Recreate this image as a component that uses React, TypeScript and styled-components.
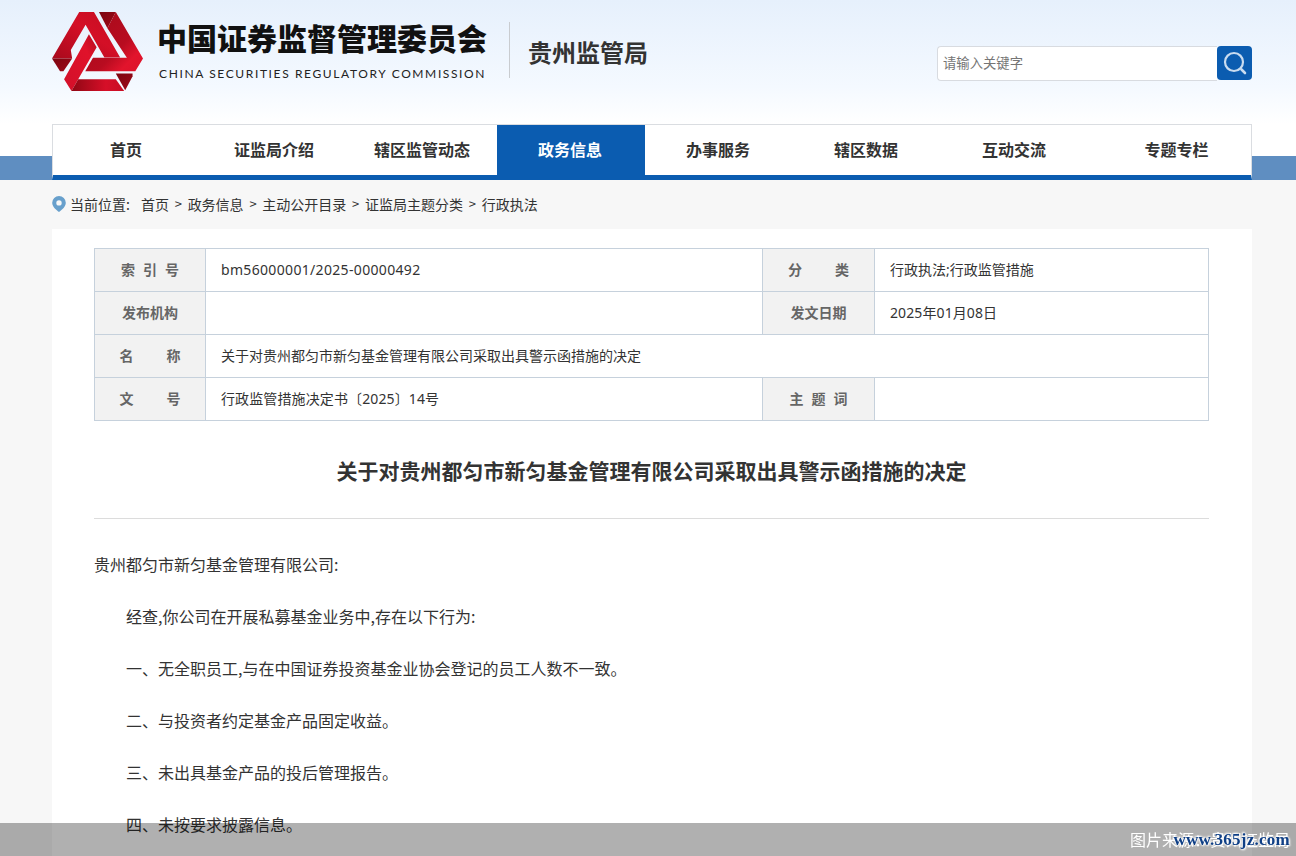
import React from "react";
import styled, { createGlobalStyle } from "styled-components";

const Global = createGlobalStyle`
  html, body { margin: 0; padding: 0; height: 856px; overflow: hidden; background: #f7f7f7; }
  body { font-family: "Noto Sans CJK SC", "Noto Sans", sans-serif; color: #333; }
  * { box-sizing: border-box; }
`;

const Page = styled.div`
  width: 1296px;
  height: 856px;
  overflow: hidden;
`;

const HeaderBand = styled.header`
  height: 124px;
  background: linear-gradient(180deg, #e6f0fc 0%, #f4f9ff 70%, #ffffff 100%);
`;

const Inner = styled.div`
  width: 1200px;
  margin: 0 0 0 52px;
`;

const HeaderRow = styled(Inner)`
  display: flex;
  align-items: flex-start;
  padding-top: 12px;
`;

const LogoMark = styled.svg`
  width: 91px;
  height: 79px;
  flex: none;
`;

const Brand = styled.div`
  margin-left: 14px;
  width: 340px;
  flex: none;
`;

const BrandCn = styled.div`
  font-size: 30px;
  line-height: 50px;
  font-weight: 900;
  color: #111;
  white-space: nowrap;
`;

const BrandEn = styled.div`
  margin-top: 3px;
  margin-left: 2px;
  font-family: "Lato", "Open Sans", sans-serif;
  font-size: 12px;
  line-height: 18px;
  letter-spacing: 1.62px;
  color: #222;
  white-space: nowrap;
`;

const Divider = styled.div`
  width: 1px;
  height: 56px;
  margin: 10px 0 0 12px;
  background: #c9ccd0;
  flex: none;
`;

const Bureau = styled.div`
  margin: 22px 0 0 18px;
  font-size: 24px;
  line-height: 36px;
  font-weight: 700;
  color: #333;
  white-space: nowrap;
`;

const Search = styled.form`
  margin: 34px 0 0 auto;
  display: flex;
  width: 315px;
  flex: none;
`;

const SearchInput = styled.input`
  width: 280px;
  height: 35px;
  padding: 0 5px 2px;
  border: 1px solid #d8dbe0;
  border-right: none;
  border-radius: 4px 0 0 4px;
  background: #fff;
  font-family: inherit;
  font-size: 13.33px;
  outline: none;
  &::placeholder { color: #757575; opacity: 1; }
`;

const SearchButton = styled.button`
  width: 35px;
  height: 34px;
  padding: 0;
  border: none;
  border-radius: 4px;
  background: #0b5cb0;
  display: flex;
  align-items: center;
  justify-content: center;
`;

const NavBand = styled.div`
  height: 56px;
  background: linear-gradient(180deg, #fff 32px, #5f8ec1 32px);
`;

const Nav = styled.nav`
  width: 1200px;
  height: 56px;
  margin-left: 52px;
  display: flex;
  background: #fff;
  border: 1px solid #dadde1;
  border-bottom: 5px solid #0b5cb0;
`;

const NavItem = styled.a<{ $active?: boolean; $last?: boolean }>`
  width: ${(p) => (p.$last ? "auto" : "148px")};
  flex: ${(p) => (p.$last ? "1" : "none")};
  padding: 0 ${(p) => (p.$last ? "0" : "2px")} 2px ${(p) => (p.$last ? "13px" : "0")};
  display: flex;
  align-items: center;
  justify-content: center;
  font-size: 16px;
  font-weight: 700;
  color: ${(p) => (p.$active ? "#fff" : "#333")};
  background: ${(p) => (p.$active ? "#0b5cb0" : "transparent")};
`;

const Crumbs = styled(Inner)`
  height: 49px;
  padding-bottom: 2px;
  display: flex;
  align-items: center;
  font-size: 14px;
  color: #333;
  white-space: nowrap;
`;

const Pin = styled.svg`
  width: 14px;
  height: 16px;
  margin: 0 4px 0 0;
  flex: none;
`;

const CrumbLabel = styled.span`
  margin-right: 11px;
`;

const CrumbSep = styled.span`
  margin: 0 5.75px;
  font-size: 13px;
`;

const Panel = styled(Inner)`
  background: #fff;
  padding: 19px 43px 0 42px;
  height: 627px;
`;

const InfoTable = styled.table`
  width: 1115px;
  border-collapse: collapse;
  table-layout: fixed;
`;

const Row = styled.tr`
  height: 43px;
`;

const LabelCell = styled.th`
  padding: 0 0 2px;
  background: #f2f2f2;
  border: 1px solid #c6d1dc;
  color: #666;
  font-size: 14px;
  font-weight: 700;
  text-align: center;
  white-space: nowrap;
`;

const Spaced = styled.span<{ $gap: number }>`
  display: inline-block;
  letter-spacing: ${(p) => p.$gap}px;
  margin-right: -${(p) => p.$gap}px;
`;

const ValueCell = styled.td<{ $track?: number }>`
  padding: 0 15px 2px;
  border: 1px solid #c6d1dc;
  color: #333;
  font-family: "Noto Sans", "Noto Sans CJK SC", sans-serif;
  font-size: 14px;
  letter-spacing: ${(p) => p.$track ?? 0}px;
  white-space: nowrap;
`;

const Title = styled.h1`
  margin: 0;
  padding: 32px 0 31px;
  border-bottom: 1px solid #dcdcdc;
  width: 1115px;
  font-size: 21px;
  line-height: 34px;
  font-weight: 700;
  color: #333;
  text-align: center;
`;

const Article = styled.div`
  padding-top: 19px;
  width: 1115px;
`;

const Para = styled.p<{ $indent?: boolean }>`
  margin: 0;
  font-size: 16px;
  line-height: 52px;
  color: #333;
  text-indent: ${(p) => (p.$indent ? "32px" : "0")};
`;

const Caption = styled.div`
  position: fixed;
  left: 0;
  right: 0;
  bottom: 0;
  height: 33px;
  background: rgba(0, 0, 0, 0.31);
  color: #fff;
  font-size: 16px;
  line-height: 33px;
  text-align: right;
  padding-right: 6px;
`;

const Watermark = styled.div`
  position: fixed;
  right: 6px;
  bottom: 6px;
  font-family: "Liberation Serif", serif;
  font-size: 17px;
  line-height: 20px;
  font-weight: 700;
  color: #0f3f86;
  letter-spacing: 0.25px;
  text-shadow: 0 0 2px #fff, 0 0 3px #fff, 1px 1px 2px #fff, -1px -1px 2px #fff;
`;

const Logo = () => (
  <LogoMark viewBox="22 22 271 235" aria-hidden="true">
    <defs>
      <linearGradient id="ga" x1="0" y1="1" x2="1" y2="0">
        <stop offset="0" stopColor="#a80a1c" />
        <stop offset="0.55" stopColor="#d40f26" />
        <stop offset="1" stopColor="#c40d22" />
      </linearGradient>
      <linearGradient id="gr" x1="0" y1="0" x2="1" y2="1">
        <stop offset="0" stopColor="#a50a1a" />
        <stop offset="0.6" stopColor="#b80c20" />
        <stop offset="0.8" stopColor="#e2142c" />
        <stop offset="1" stopColor="#dc122a" />
      </linearGradient>
      <linearGradient id="gb" x1="0" y1="1" x2="1" y2="0">
        <stop offset="0" stopColor="#d2102a" />
        <stop offset="0.7" stopColor="#e0122a" />
        <stop offset="1" stopColor="#b00c20" />
      </linearGradient>
      <linearGradient id="gc" x1="0" y1="0" x2="1" y2="0">
        <stop offset="0" stopColor="#8f0714" />
        <stop offset="0.65" stopColor="#d60f28" />
        <stop offset="1" stopColor="#c80e24" />
      </linearGradient>
      <linearGradient id="gd" x1="0" y1="0" x2="1" y2="1">
        <stop offset="0" stopColor="#7c0510" />
        <stop offset="1" stopColor="#a00919" />
      </linearGradient>
    </defs>
    <polygon fill="url(#ga)" points="22,160 103,22 147,22 225,157 178,157 122,60 78,135 82,160" />
    <polygon fill="url(#gd)" points="22,160 82,160 56,198 46,198" />
    <polygon fill="url(#gd)" points="162,22 212,22 187,70" />
    <polygon fill="url(#gr)" points="212,22 293,160 270,198 121,198 144,158 245,158 187,70" />
    <polygon fill="url(#gb)" points="58,222 132,88 155,127 106,212 100,222 80,257" />
    <polygon fill="url(#gc)" points="80,257 100,222 212,222 237,257" />
    <polygon fill="url(#gd)" points="212,205 262,205 262,213 240,255" />
  </LogoMark>
);

const navItems = ["首页", "证监局介绍", "辖区监管动态", "政务信息", "办事服务", "辖区数据", "互动交流"];
const crumbs = ["首页", "政务信息", "主动公开目录", "证监局主题分类", "行政执法"];
const paragraphs = [
  "经查,你公司在开展私募基金业务中,存在以下行为:",
  "一、无全职员工,与在中国证券投资基金业协会登记的员工人数不一致。",
  "二、与投资者约定基金产品固定收益。",
  "三、未出具基金产品的投后管理报告。",
  "四、未按要求披露信息。",
];

export default function App() {
  return (
    <Page>
      <Global />
      <HeaderBand>
        <HeaderRow>
          <Logo />
          <Brand>
            <BrandCn>中国证券监督管理委员会</BrandCn>
            <BrandEn>CHINA SECURITIES REGULATORY COMMISSION</BrandEn>
          </Brand>
          <Divider />
          <Bureau>贵州监管局</Bureau>
          <Search onSubmit={(e) => e.preventDefault()}>
            <SearchInput placeholder="请输入关键字" />
            <SearchButton type="submit" aria-label="搜索">
              <svg width="26" height="26" viewBox="0 0 26 26" fill="none" stroke="#c9dcf0" strokeLinecap="round">
                <circle cx="12" cy="12" r="9" strokeWidth="2.2" />
                <path d="M19.5 19.5 L23 23" strokeWidth="2.6" />
              </svg>
            </SearchButton>
          </Search>
        </HeaderRow>
      </HeaderBand>

      <NavBand>
        <Nav>
          {navItems.map((t) => (
            <NavItem key={t} $active={t === "政务信息"}>{t}</NavItem>
          ))}
          <NavItem $last>专题专栏</NavItem>
        </Nav>
      </NavBand>

      <Crumbs>
        <Pin viewBox="0 0 14 16" aria-hidden="true">
          <path fillRule="evenodd" fill="#68a0cc" d="M7 0a6.8 6.8 0 0 1 6.8 6.8C13.8 10.8 9.6 14.2 7 16 4.4 14.2.2 10.8.2 6.8A6.8 6.8 0 0 1 7 0Zm0 4.2a2.7 2.7 0 1 0 0 5.4 2.7 2.7 0 0 0 0-5.4Z" />
        </Pin>
        <CrumbLabel>当前位置:</CrumbLabel>
        {crumbs.map((c, i) => (
          <React.Fragment key={c}>
            {i > 0 && <CrumbSep>&gt;</CrumbSep>}
            <span>{c}</span>
          </React.Fragment>
        ))}
      </Crumbs>

      <Panel>
        <InfoTable>
          <colgroup>
            <col style={{ width: 111 }} />
            <col style={{ width: 557 }} />
            <col style={{ width: 112 }} />
            <col />
          </colgroup>
          <tbody>
            <Row>
              <LabelCell><Spaced $gap={8}>索引号</Spaced></LabelCell>
              <ValueCell $track={0.33}>bm56000001/2025-00000492</ValueCell>
              <LabelCell><Spaced $gap={33}>分类</Spaced></LabelCell>
              <ValueCell>行政执法;行政监管措施</ValueCell>
            </Row>
            <Row>
              <LabelCell>发布机构</LabelCell>
              <ValueCell />
              <LabelCell>发文日期</LabelCell>
              <ValueCell $track={0.1}>2025年01月08日</ValueCell>
            </Row>
            <Row>
              <LabelCell><Spaced $gap={33}>名称</Spaced></LabelCell>
              <ValueCell colSpan={3}>关于对贵州都匀市新匀基金管理有限公司采取出具警示函措施的决定</ValueCell>
            </Row>
            <Row>
              <LabelCell><Spaced $gap={33}>文号</Spaced></LabelCell>
              <ValueCell $track={0.12}>行政监管措施决定书〔2025〕14号</ValueCell>
              <LabelCell><Spaced $gap={8}>主题词</Spaced></LabelCell>
              <ValueCell />
            </Row>
          </tbody>
        </InfoTable>
        <Title>关于对贵州都匀市新匀基金管理有限公司采取出具警示函措施的决定</Title>
        <Article>
          <Para>贵州都匀市新匀基金管理有限公司:</Para>
          {paragraphs.map((p) => (
            <Para key={p} $indent>{p}</Para>
          ))}
        </Article>
      </Panel>

      <Caption>图片来源：贵州证监局</Caption>
      <Watermark>www.365jz.com</Watermark>
    </Page>
  );
}
